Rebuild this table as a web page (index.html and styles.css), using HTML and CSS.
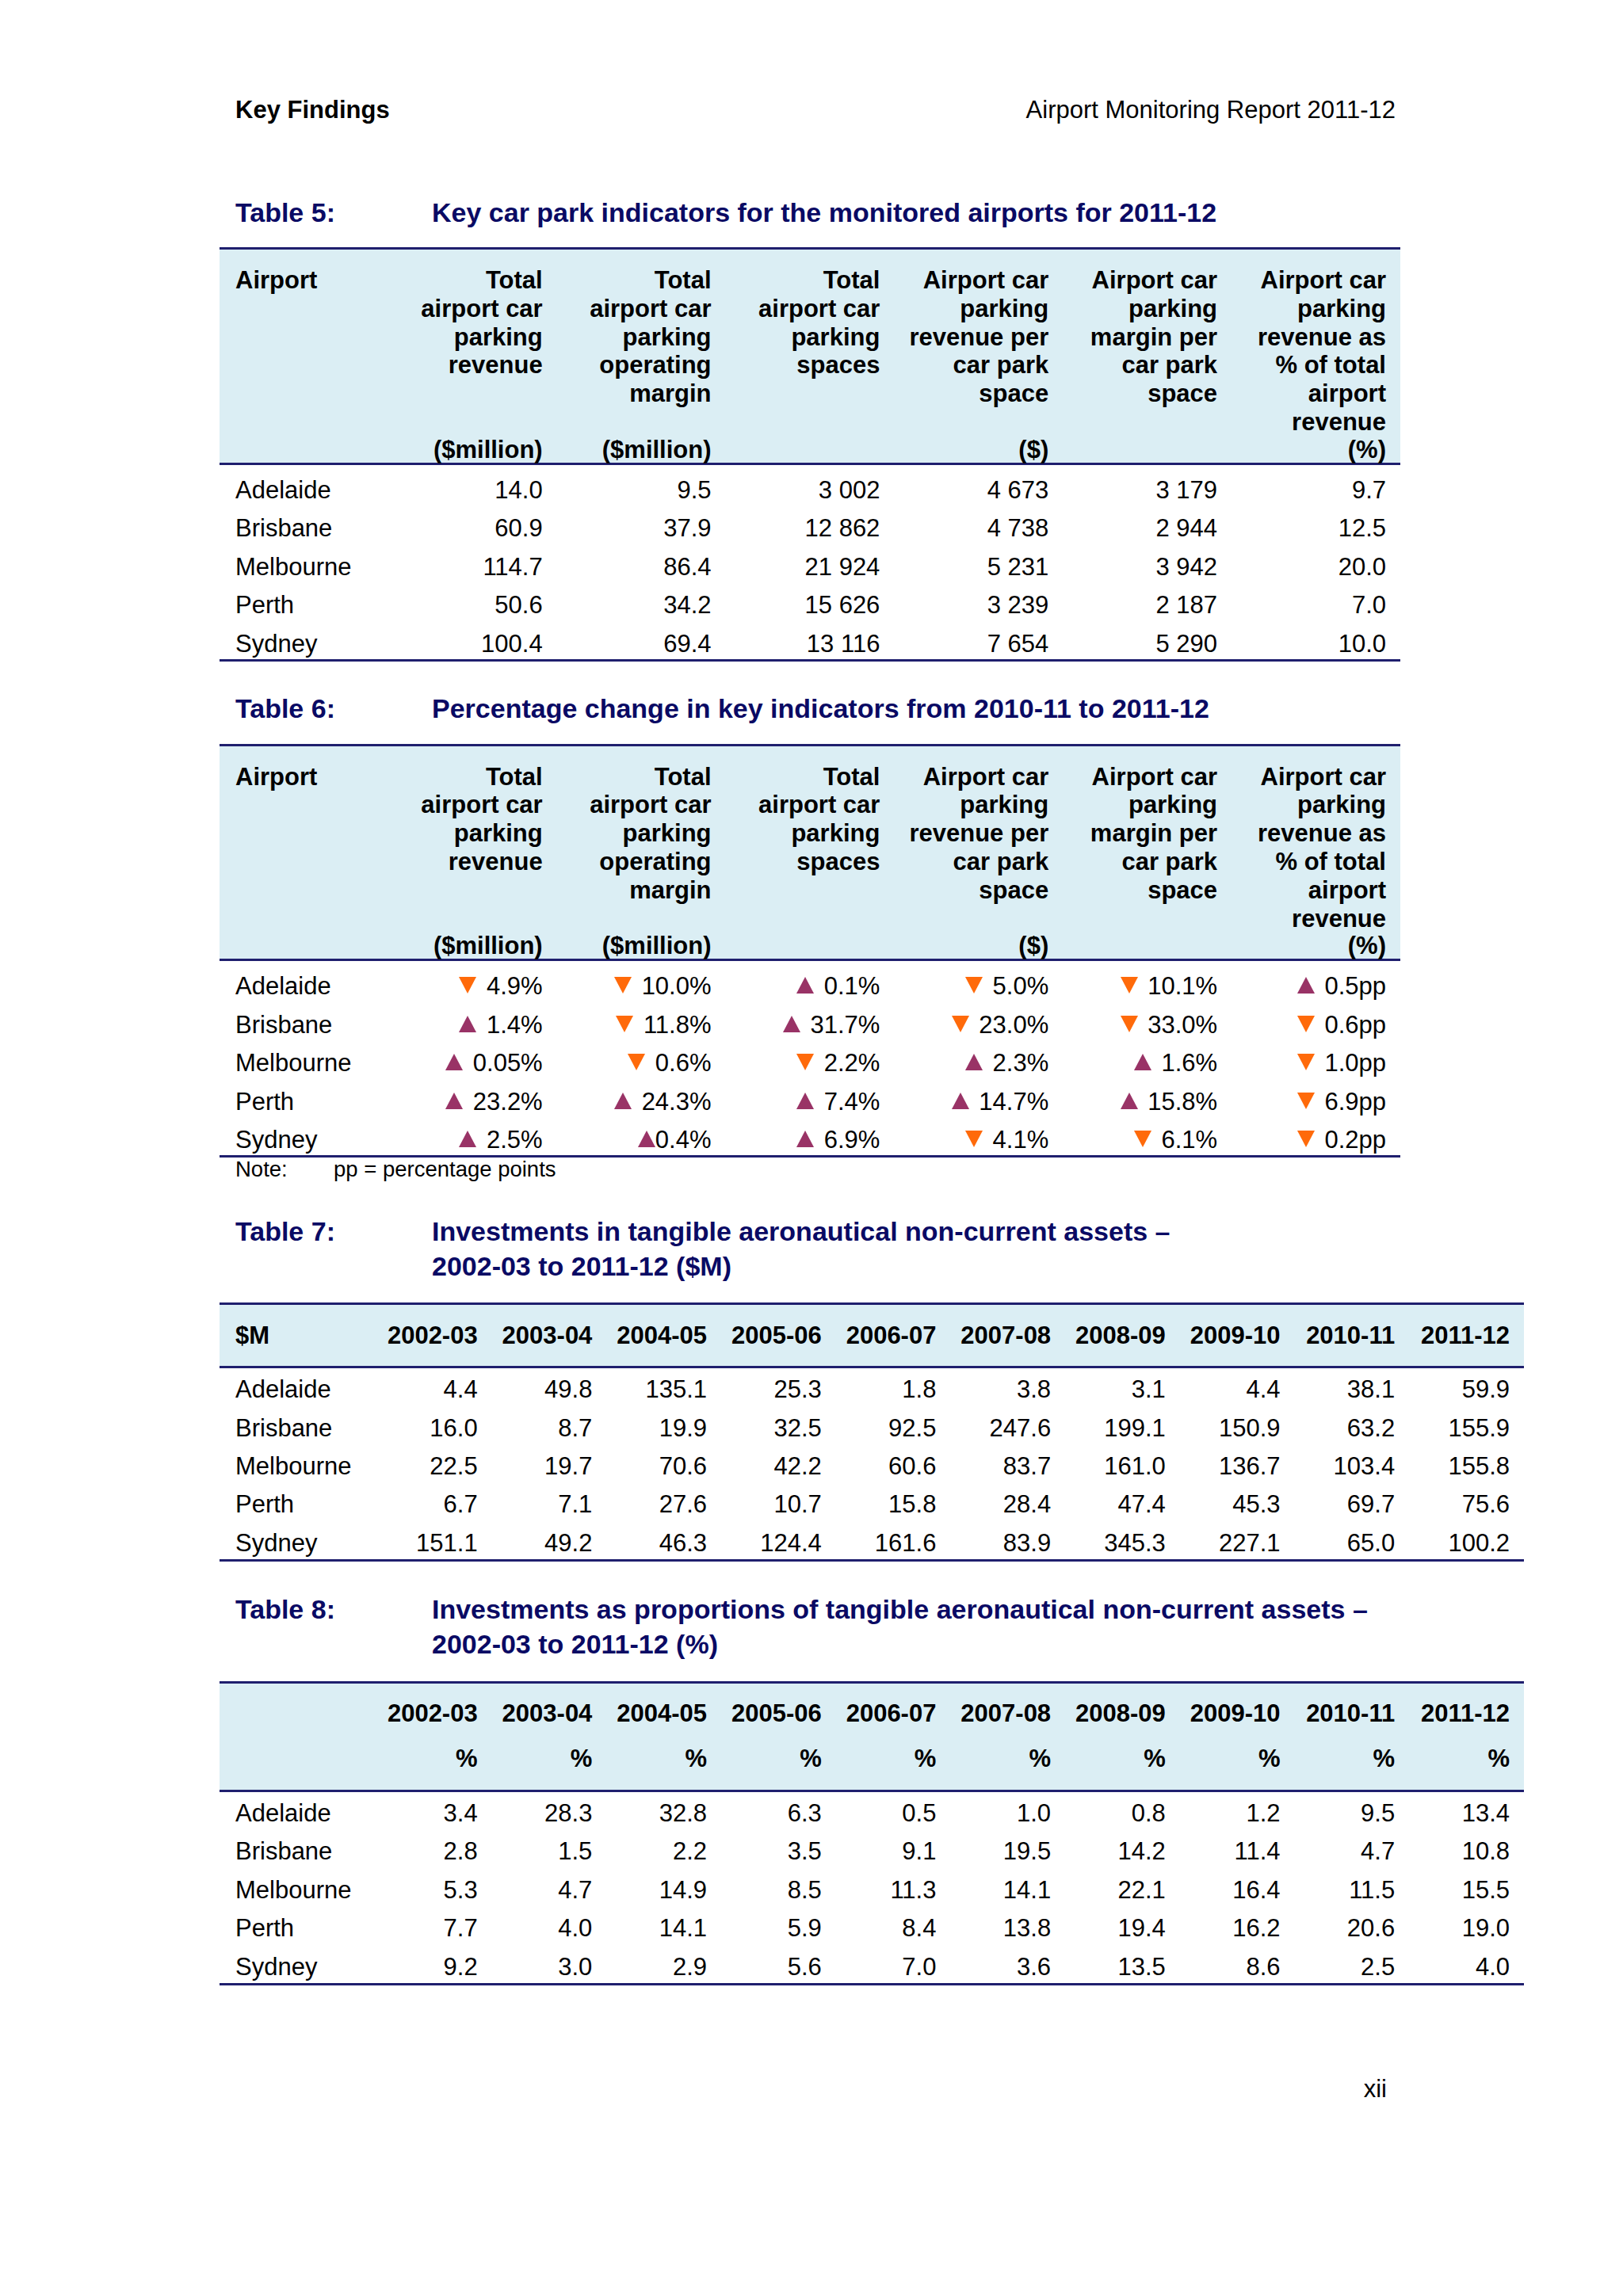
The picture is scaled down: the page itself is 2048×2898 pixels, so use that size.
FILE: index.html
```html
<!DOCTYPE html>
<html lang="en">
<head>
<meta charset="utf-8">
<title>Key Findings – Airport Monitoring Report 2011-12</title>
<link rel="stylesheet" href="styles.css">
</head>
<body>
<div class="page">
  <header class="running">
    <span class="section">Key Findings</span>
    <span class="report">Airport Monitoring Report 2011-12</span>
  </header>

  <div class="tt t5">
    <span class="lbl">Table 5:</span>
    <span class="txt">Key car park indicators for the monitored airports for 2011-12</span>
  </div>
  <table class="kpi">
    <colgroup><col><col><col><col><col><col><col></colgroup>
    <thead>
      <tr class="hl">
        <th class="first" rowspan="2">Airport</th>
        <th>Total<br>airport car<br>parking<br>revenue</th>
        <th>Total<br>airport car<br>parking<br>operating<br>margin</th>
        <th>Total<br>airport car<br>parking<br>spaces</th>
        <th>Airport car<br>parking<br>revenue per<br>car park<br>space</th>
        <th>Airport car<br>parking<br>margin per<br>car park<br>space</th>
        <th>Airport car<br>parking<br>revenue as<br>% of total<br>airport<br>revenue</th>
      </tr>
      <tr class="hu">
        <th>($million)</th>
        <th>($million)</th>
        <th></th>
        <th>($)</th>
        <th></th>
        <th>(%)</th>
      </tr>
    </thead>
    <tbody>
      <tr><td class="first">Adelaide</td><td>14.0</td><td>9.5</td><td>3 002</td><td>4 673</td><td>3 179</td><td>9.7</td></tr>
      <tr><td class="first">Brisbane</td><td>60.9</td><td>37.9</td><td>12 862</td><td>4 738</td><td>2 944</td><td>12.5</td></tr>
      <tr><td class="first">Melbourne</td><td>114.7</td><td>86.4</td><td>21 924</td><td>5 231</td><td>3 942</td><td>20.0</td></tr>
      <tr><td class="first">Perth</td><td>50.6</td><td>34.2</td><td>15 626</td><td>3 239</td><td>2 187</td><td>7.0</td></tr>
      <tr><td class="first">Sydney</td><td>100.4</td><td>69.4</td><td>13 116</td><td>7 654</td><td>5 290</td><td>10.0</td></tr>
    </tbody>
  </table>

  <div class="tt t6">
    <span class="lbl">Table 6:</span>
    <span class="txt">Percentage change in key indicators from 2010-11 to 2011-12</span>
  </div>
  <table class="kpi">
    <colgroup><col><col><col><col><col><col><col></colgroup>
    <thead>
      <tr class="hl">
        <th class="first" rowspan="2">Airport</th>
        <th>Total<br>airport car<br>parking<br>revenue</th>
        <th>Total<br>airport car<br>parking<br>operating<br>margin</th>
        <th>Total<br>airport car<br>parking<br>spaces</th>
        <th>Airport car<br>parking<br>revenue per<br>car park<br>space</th>
        <th>Airport car<br>parking<br>margin per<br>car park<br>space</th>
        <th>Airport car<br>parking<br>revenue as<br>% of total<br>airport<br>revenue</th>
      </tr>
      <tr class="hu">
        <th>($million)</th>
        <th>($million)</th>
        <th></th>
        <th>($)</th>
        <th></th>
        <th>(%)</th>
      </tr>
    </thead>
    <tbody>
      <tr><td class="first">Adelaide</td><td><i class="dn"></i> 4.9%</td><td><i class="dn"></i> 10.0%</td><td><i class="up"></i> 0.1%</td><td><i class="dn"></i> 5.0%</td><td><i class="dn"></i> 10.1%</td><td><i class="up"></i> 0.5pp</td></tr>
      <tr><td class="first">Brisbane</td><td><i class="up"></i> 1.4%</td><td><i class="dn"></i> 11.8%</td><td><i class="up"></i> 31.7%</td><td><i class="dn"></i> 23.0%</td><td><i class="dn"></i> 33.0%</td><td><i class="dn"></i> 0.6pp</td></tr>
      <tr><td class="first">Melbourne</td><td><i class="up"></i> 0.05%</td><td><i class="dn"></i> 0.6%</td><td><i class="dn"></i> 2.2%</td><td><i class="up"></i> 2.3%</td><td><i class="up"></i> 1.6%</td><td><i class="dn"></i> 1.0pp</td></tr>
      <tr><td class="first">Perth</td><td><i class="up"></i> 23.2%</td><td><i class="up"></i> 24.3%</td><td><i class="up"></i> 7.4%</td><td><i class="up"></i> 14.7%</td><td><i class="up"></i> 15.8%</td><td><i class="dn"></i> 6.9pp</td></tr>
      <tr><td class="first">Sydney</td><td><i class="up"></i> 2.5%</td><td><i class="up tight"></i>0.4%</td><td><i class="up"></i> 6.9%</td><td><i class="dn"></i> 4.1%</td><td><i class="dn"></i> 6.1%</td><td><i class="dn"></i> 0.2pp</td></tr>
    </tbody>
  </table>
  <div class="note"><span class="k">Note:</span><span>pp = percentage points</span></div>

  <div class="tt t7">
    <span class="lbl">Table 7:</span>
    <span class="txt">Investments in tangible aeronautical non-current assets –<br>2002-03 to 2011-12 ($M)</span>
  </div>
  <table class="inv">
    <colgroup><col class="c0"><col><col><col><col><col><col><col><col><col><col></colgroup>
    <thead>
      <tr class="single">
        <th class="first">$M</th><th>2002-03</th><th>2003-04</th><th>2004-05</th><th>2005-06</th><th>2006-07</th><th>2007-08</th><th>2008-09</th><th>2009-10</th><th>2010-11</th><th>2011-12</th>
      </tr>
    </thead>
    <tbody>
      <tr><td class="first">Adelaide</td><td>4.4</td><td>49.8</td><td>135.1</td><td>25.3</td><td>1.8</td><td>3.8</td><td>3.1</td><td>4.4</td><td>38.1</td><td>59.9</td></tr>
      <tr><td class="first">Brisbane</td><td>16.0</td><td>8.7</td><td>19.9</td><td>32.5</td><td>92.5</td><td>247.6</td><td>199.1</td><td>150.9</td><td>63.2</td><td>155.9</td></tr>
      <tr><td class="first">Melbourne</td><td>22.5</td><td>19.7</td><td>70.6</td><td>42.2</td><td>60.6</td><td>83.7</td><td>161.0</td><td>136.7</td><td>103.4</td><td>155.8</td></tr>
      <tr><td class="first">Perth</td><td>6.7</td><td>7.1</td><td>27.6</td><td>10.7</td><td>15.8</td><td>28.4</td><td>47.4</td><td>45.3</td><td>69.7</td><td>75.6</td></tr>
      <tr><td class="first">Sydney</td><td>151.1</td><td>49.2</td><td>46.3</td><td>124.4</td><td>161.6</td><td>83.9</td><td>345.3</td><td>227.1</td><td>65.0</td><td>100.2</td></tr>
    </tbody>
  </table>

  <div class="tt t8">
    <span class="lbl">Table 8:</span>
    <span class="txt">Investments as proportions of tangible aeronautical non-current assets –<br>2002-03 to 2011-12 (%)</span>
  </div>
  <table class="inv">
    <colgroup><col class="c0"><col><col><col><col><col><col><col><col><col><col></colgroup>
    <thead>
      <tr class="yr">
        <th class="first" rowspan="2"></th><th>2002-03</th><th>2003-04</th><th>2004-05</th><th>2005-06</th><th>2006-07</th><th>2007-08</th><th>2008-09</th><th>2009-10</th><th>2010-11</th><th>2011-12</th>
      </tr>
      <tr class="pc">
        <th>%</th><th>%</th><th>%</th><th>%</th><th>%</th><th>%</th><th>%</th><th>%</th><th>%</th><th>%</th>
      </tr>
    </thead>
    <tbody>
      <tr><td class="first">Adelaide</td><td>3.4</td><td>28.3</td><td>32.8</td><td>6.3</td><td>0.5</td><td>1.0</td><td>0.8</td><td>1.2</td><td>9.5</td><td>13.4</td></tr>
      <tr><td class="first">Brisbane</td><td>2.8</td><td>1.5</td><td>2.2</td><td>3.5</td><td>9.1</td><td>19.5</td><td>14.2</td><td>11.4</td><td>4.7</td><td>10.8</td></tr>
      <tr><td class="first">Melbourne</td><td>5.3</td><td>4.7</td><td>14.9</td><td>8.5</td><td>11.3</td><td>14.1</td><td>22.1</td><td>16.4</td><td>11.5</td><td>15.5</td></tr>
      <tr><td class="first">Perth</td><td>7.7</td><td>4.0</td><td>14.1</td><td>5.9</td><td>8.4</td><td>13.8</td><td>19.4</td><td>16.2</td><td>20.6</td><td>19.0</td></tr>
      <tr><td class="first">Sydney</td><td>9.2</td><td>3.0</td><td>2.9</td><td>5.6</td><td>7.0</td><td>3.6</td><td>13.5</td><td>8.6</td><td>2.5</td><td>4.0</td></tr>
    </tbody>
  </table>

  <footer class="pagenum">xii</footer>
</div>
</body>
</html>
```

FILE: styles.css
```css
html, body {
  margin: 0;
  padding: 0;
  background: #ffffff;
}

body {
  font-family: "Liberation Sans", Arial, sans-serif;
  font-size: 31px;
  color: #000000;
}

.page {
  width: 2048px;
  box-sizing: border-box;
  padding: 121px 0 0 277px;
}

/* running header */
.running {
  display: flex;
  justify-content: space-between;
  margin-left: 20px;
  width: 1464px;
  line-height: 36px;
}
.running .section { font-weight: bold; }

/* table titles */
.tt {
  display: flex;
  margin-left: 20px;
  color: #0a0a64;
  font-weight: bold;
  font-size: 34px;
  line-height: 44px;
}
.tt .lbl { width: 248px; flex: none; }
.tt.t5 { margin-top: 89px; margin-bottom: 22px; }
.tt.t6 { margin-top: 37px; margin-bottom: 23px; }
.tt.t7 { margin-top: 41px; margin-bottom: 24px; }
.tt.t8 { margin-top: 38px; margin-bottom: 25px; }

/* tables */
table {
  border-collapse: collapse;
  table-layout: fixed;
}
table.kpi { width: 1490px; }
table.inv { width: 1646px; }
table.inv col.c0 { width: 199px; }

th, td {
  padding: 0 18px 0 0;
  text-align: right;
  white-space: nowrap;
  vertical-align: top;
}
th.first, td.first {
  padding-left: 20px;
  text-align: left;
}

thead th {
  background: #dbeef4;
  font-weight: bold;
}
thead tr:first-child th { border-top: 3px solid #1f1f6e; }
thead tr:last-child th,
thead th[rowspan] { border-bottom: 3px solid #1f1f6e; }

/* kpi headers */
.kpi thead th { line-height: 35.8px; }
.kpi tr.hl th { padding-top: 21px; }
.kpi tr.hu th { vertical-align: bottom; line-height: 33px; }

/* investments headers */
.inv tr.single th {
  line-height: 36px;
  padding-top: 21px;
  padding-bottom: 20px;
}
.inv tr.yr th {
  line-height: 36px;
  padding-top: 20px;
}
.inv tr.pc th {
  line-height: 36px;
  padding-top: 21px;
  padding-bottom: 21px;
}

/* body rows */
tbody td {
  line-height: 48.4px;
  height: 48.4px;
}
.kpi tbody tr:first-child td { padding-top: 8px; }
.inv tbody tr:first-child td { padding-top: 3px; }
.kpi tbody tr:last-child td {
  height: auto;
  line-height: 38px;
  padding-top: 5.2px;
}
.inv tbody tr:last-child td {
  height: auto;
  line-height: 40px;
  padding-top: 4.2px;
}
tbody tr:last-child td { border-bottom: 3px solid #1f1f6e; }

/* change markers */
i.up, i.dn {
  display: inline-block;
  width: 0;
  height: 0;
  border-left: 11px solid transparent;
  border-right: 11px solid transparent;
  vertical-align: 1px;
  margin-right: 4px;
}
i.up.tight { margin-right: 0; }
i.up { border-bottom: 21px solid #993366; }
i.dn { border-top: 21px solid #ff6a0a; }

/* note */
.note {
  display: flex;
  margin-left: 20px;
  font-size: 27.5px;
  line-height: 30px;
}
.note .k { width: 124px; flex: none; }

/* page number */
.pagenum {
  margin-top: 113px;
  margin-left: 20px;
  width: 1453px;
  text-align: right;
  line-height: 36px;
}
```
